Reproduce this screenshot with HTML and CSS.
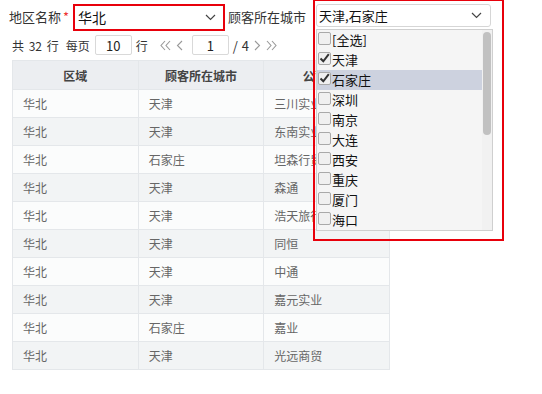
FILE: index.html
```html
<!DOCTYPE html>
<html lang="zh">
<head>
<meta charset="utf-8">
<link rel="stylesheet" href="styles.css">
</head>
<body>
<div class="page">
  <div class="filters">
    <span class="label">地区名称<span class="req">*</span></span>
    <div class="select region">
      <span class="value">华北</span>
      <svg class="chev" width="11" height="7" viewBox="0 0 11 7"><path d="M1 1l4.5 4.5L10 1" fill="none" stroke="#444" stroke-width="1.2"/></svg>
    </div>
    <span class="label city-label">顾客所在城市</span>
    <div class="city-field">
      <div class="select city">
        <span class="value">天津,石家庄</span>
        <svg class="chev" width="11" height="7" viewBox="0 0 11 7"><path d="M1 1l4.5 4.5L10 1" fill="none" stroke="#444" stroke-width="1.2"/></svg>
      </div>
      <div class="popup">
        <ul class="options">
          <li><span class="cb"></span><span class="opt">[全选]</span></li>
          <li><span class="cb on"><svg width="11" height="10" viewBox="0 0 11 10"><path d="M1.5 5.5l2.8 2.8L9.8 1.2" fill="none" stroke="#333" stroke-width="2"/></svg></span><span class="opt">天津</span></li>
          <li class="hl"><span class="cb on"><svg width="11" height="10" viewBox="0 0 11 10"><path d="M1.5 5.5l2.8 2.8L9.8 1.2" fill="none" stroke="#333" stroke-width="2"/></svg></span><span class="opt">石家庄</span></li>
          <li><span class="cb"></span><span class="opt">深圳</span></li>
          <li><span class="cb"></span><span class="opt">南京</span></li>
          <li><span class="cb"></span><span class="opt">大连</span></li>
          <li><span class="cb"></span><span class="opt">西安</span></li>
          <li><span class="cb"></span><span class="opt">重庆</span></li>
          <li><span class="cb"></span><span class="opt">厦门</span></li>
          <li><span class="cb"></span><span class="opt">海口</span></li>
        </ul>
        <div class="scrollbar"><div class="thumb"></div></div>
      </div>
    </div>
  </div>

  <div class="pager">
    <span class="count">共 32 行</span>
    <span class="per">每页</span>
    <span class="box size">10</span>
    <span>行</span>
    <span class="nav first">
      <svg width="11" height="11" viewBox="0 0 11 11"><path d="M5 1L1 5.5 5 10M10 1L6 5.5 10 10" fill="none" stroke="#999" stroke-width="1.1"/></svg>
    </span>
    <span class="nav">
      <svg width="7" height="11" viewBox="0 0 7 11"><path d="M6 1L1.5 5.5 6 10" fill="none" stroke="#999" stroke-width="1.1"/></svg>
    </span>
    <span class="box pg">1</span>
    <span class="total">/ 4</span>
    <span class="nav">
      <svg width="7" height="11" viewBox="0 0 7 11"><path d="M1 1l4.5 4.5L1 10" fill="none" stroke="#999" stroke-width="1.1"/></svg>
    </span>
    <span class="nav">
      <svg width="11" height="11" viewBox="0 0 11 11"><path d="M1 1l4 4.5L1 10M6 1l4 4.5L6 10" fill="none" stroke="#999" stroke-width="1.1"/></svg>
    </span>
  </div>

  <table class="grid">
    <thead>
      <tr><th>区域</th><th>顾客所在城市</th><th>公司名称</th></tr>
    </thead>
    <tbody>
      <tr><td>华北</td><td>天津</td><td>三川实业</td></tr>
      <tr><td>华北</td><td>天津</td><td>东南实业</td></tr>
      <tr><td>华北</td><td>石家庄</td><td>坦森行贸易</td></tr>
      <tr><td>华北</td><td>天津</td><td>森通</td></tr>
      <tr><td>华北</td><td>天津</td><td>浩天旅行社</td></tr>
      <tr><td>华北</td><td>天津</td><td>同恒</td></tr>
      <tr><td>华北</td><td>天津</td><td>中通</td></tr>
      <tr><td>华北</td><td>天津</td><td>嘉元实业</td></tr>
      <tr><td>华北</td><td>石家庄</td><td>嘉业</td></tr>
      <tr><td>华北</td><td>天津</td><td>光远商贸</td></tr>
    </tbody>
  </table>
</div>
</body>
</html>
```
FILE: styles.css
```css
* { box-sizing: border-box; }
html, body { margin: 0; padding: 0; background: #fff; }
body {
  font-family: "Microsoft YaHei", "Noto Sans CJK SC", "Noto Sans", sans-serif;
  color: #333;
  font-size: 13px;
}
.page { width: 542px; height: 394px; position: relative; }

.filters {
  display: flex;
  align-items: center;
  height: 31px;
  padding: 3px 0 0 9px;
}
.label { font-size: 13px; color: #333; line-height: 20px; white-space: nowrap; }
.req { color: #e33; margin-left: 2px; }
.select {
  position: relative;
  display: flex;
  align-items: center;
  justify-content: space-between;
  background: #fff;
  font-size: 13px;
  color: #111;
}
.select .value { line-height: 20px; }
.region {
  width: 152px;
  height: 27px;
  margin-left: 4px;
  border: 2px solid #e8000b;
  padding: 0 7px 0 3px;
}
.region .value { font-size: 14px; }
.city-label { margin-left: 3px; }
.city-field {
  position: relative;
  margin-left: 10px;
  width: 175px;
  height: 23px;
  align-self: flex-start;
  margin-top: 1px;
}
.city-field::after {
  content: "";
  position: absolute;
  left: -3px;
  top: -5px;
  width: 187px;
  height: 238px;
  border: 2px solid #e8000b;
  pointer-events: none;
  z-index: 3;
}
.city {
  width: 175px;
  height: 23px;
  border: 1px solid #d6d6d6;
  border-radius: 3px;
  padding: 0 8px 0 2px;
}
.popup {
  position: absolute;
  left: 0;
  top: 25px;
  width: 177px;
  height: 202px;
  background: #f5f5f5;
  border: 1px solid #cfcfcf;
  z-index: 2;
  display: flex;
}
.options {
  list-style: none;
  margin: 0;
  padding: 0;
  flex: 1;
}
.options li {
  height: 20px;
  display: flex;
  align-items: center;
  font-size: 13px;
  line-height: 16px;
  color: #111;
  padding-left: 1px;
  overflow: hidden;
}
.options li.hl { background: #cdd2df; }
.cb {
  flex: none;
  width: 13px;
  height: 13px;
  border: 1px solid #a9a9a9;
  border-radius: 2px;
  background: #f0f0f0;
  margin-right: 1px;
  display: inline-flex;
  align-items: center;
  justify-content: center;
  margin-top: -4px;
}
.cb svg { display: block; }
.scrollbar {
  width: 10px;
  background: #f1f1f1;
  padding: 2px 1px;
}
.thumb {
  width: 8px;
  height: 103px;
  background: #c1c1c1;
  border-radius: 4px;
}

.pager {
  display: flex;
  align-items: center;
  height: 28px;
  padding-left: 12px;
  font-size: 12px;
  color: #333;
}
.count { word-spacing: 2px; }
.per { margin-left: 7px; }
.box {
  display: inline-flex;
  align-items: center;
  justify-content: center;
  height: 20px;
  border: 1px solid #d9d9d9;
  border-radius: 2px;
  font-size: 13px;
  color: #222;
}
.size { width: 37px; margin: 0 4px 0 5px; }
.nav { display: inline-flex; align-items: center; margin-left: 5px; }
.nav.first { margin-left: 12px; }
.pg { width: 37px; margin: 0 4px 0 9px; }
.total { font-size: 13px; word-spacing: 1px; }

.grid {
  margin: 1px 0 0 12px;
  border-collapse: collapse;
  width: 378px;
  table-layout: fixed;
  font-size: 12px;
}
.grid th, .grid td {
  border: 1px solid #e4e7ea;
  height: 28px;
  padding: 0 10px;
  text-align: left;
  white-space: nowrap;
  overflow: hidden;
}
.grid th {
  background: #eceef1;
  text-align: center;
  font-weight: bold;
  color: #444;
  height: 29px;
}
.grid td { color: #666; }
.grid tbody tr:nth-child(odd) td { background: #fbfcfc; }
.grid tbody tr:nth-child(even) td { background: #f2f4f5; }
```
